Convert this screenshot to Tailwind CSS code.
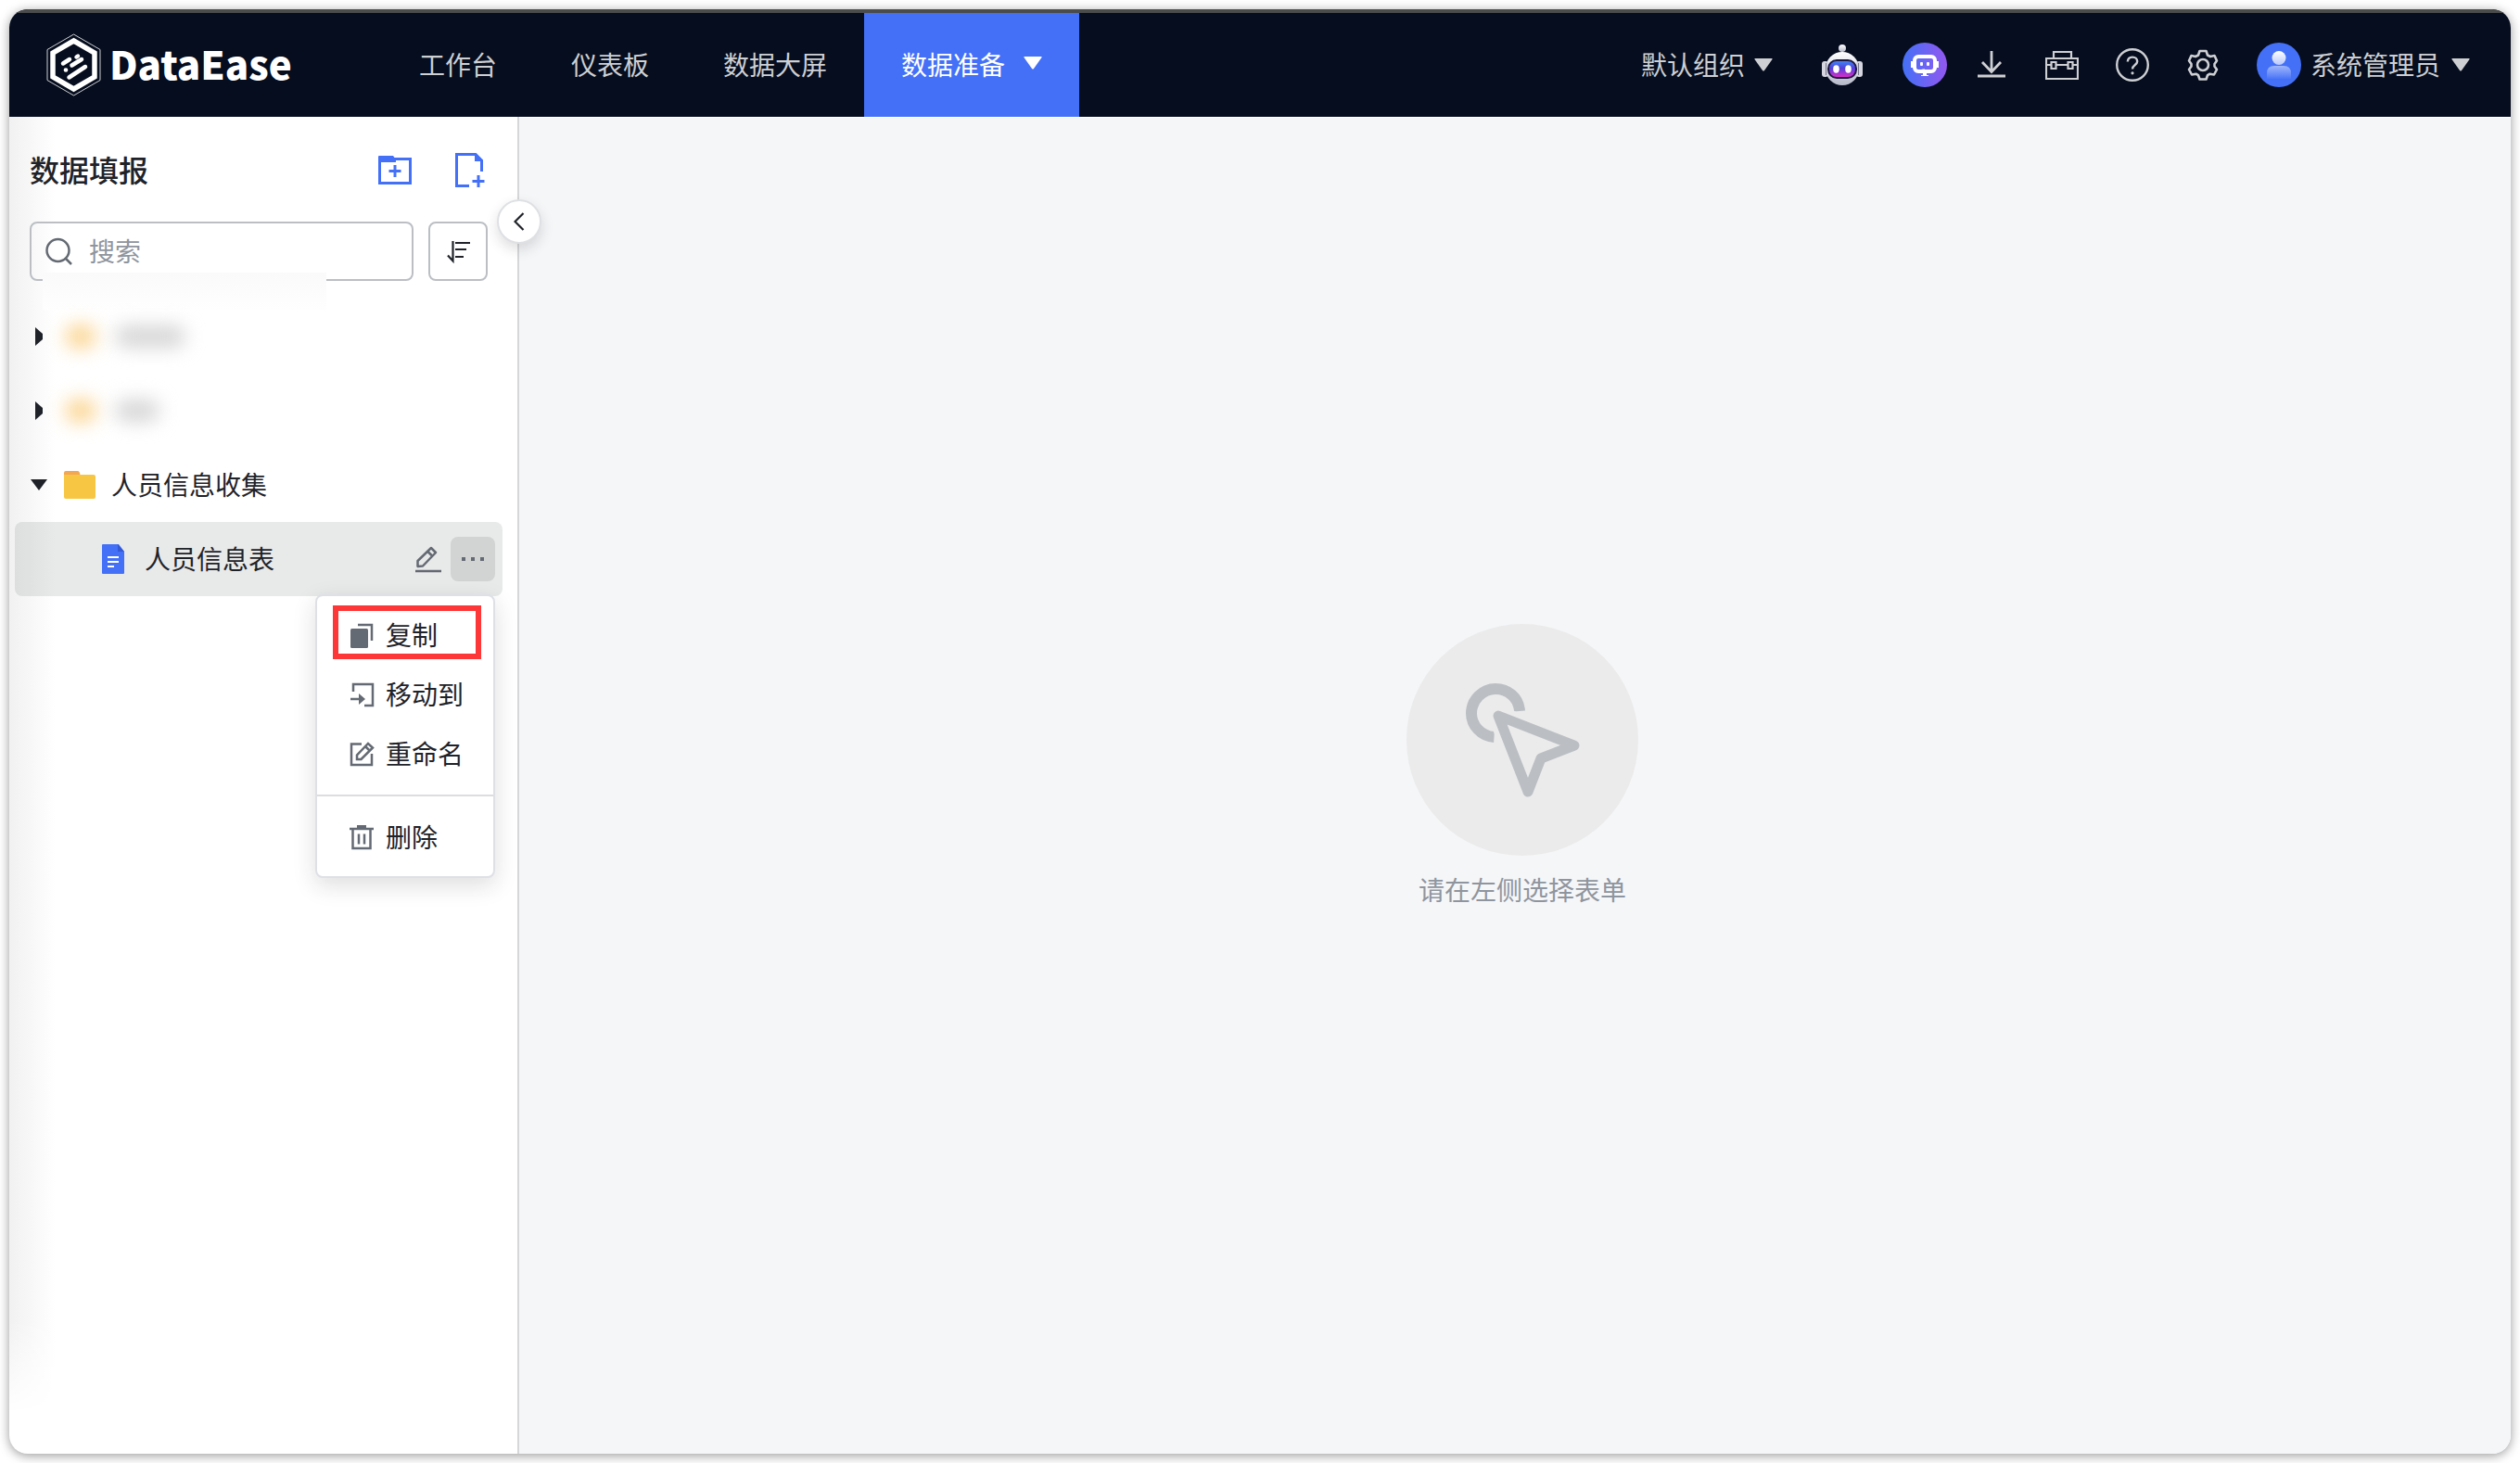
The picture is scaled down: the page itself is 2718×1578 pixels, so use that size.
<!DOCTYPE html>
<html lang="zh-CN">
<head>
<meta charset="utf-8">
<title>DataEase</title>
<script src="https://cdn.jsdelivr.net/npm/@tailwindcss/browser@4"></script>
</head>
<body class="h-screen bg-white p-[10px] font-['Noto_Sans_CJK_SC',sans-serif] text-[28px] leading-[40px] text-[#1f2329]">
<div class="flex h-full flex-col overflow-hidden rounded-[20px] bg-white shadow-[0_2px_12px_rgba(0,0,0,0.4)]">
  <header class="flex h-[116px] shrink-0 items-center border-t-4 border-[#4a4b4b] bg-[#060d1e] pr-[44px] pl-[40px] text-[#cdcfd3]">
    <a href="#" class="flex w-[362px] items-center gap-[8px] text-white">
      <svg class="h-[68px] w-[60px]" viewBox="0 0 60 68" fill="none"><path d="M29.500 1 58 17.500V50.500L29.500 67 1 50.500V17.500Z" stroke="#fff" stroke-width=".8"/><path d="M29.500 8 52 21V47L29.500 60 7 47V21Z" stroke="#fff" stroke-width="5.500"/><path d="M18 32.500 25 28M32.500 25.500 34 24.500M27.500 34.500 38 28M24.500 47.500 42 36" stroke="#fff" stroke-width="4.500" stroke-linecap="round"/><circle cx="21" cy="39.500" r="2.300" fill="#fff"/></svg>
      <span class="pb-1 text-[42px] leading-[56px] font-black">DataEase</span>
    </a>
    <nav class="flex h-full">
      <a href="#" class="flex items-center px-[40px] pb-[2px]">工作台</a>
      <a href="#" class="flex items-center px-[40px] pb-[2px]">仪表板</a>
      <a href="#" class="flex items-center px-[40px] pb-[2px]">数据大屏</a>
      <a href="#" class="flex items-center gap-[20px] bg-[#4370f7] px-[40px] pb-[2px] text-white">数据准备<svg class="mb-[2px] h-[14px] w-[20px]" viewBox="0 0 20 14" fill="currentColor"><path d="M1 0H19Q20 0 19.500 1L11 13Q10 14 9 13L.5 1Q0 0 1 0Z"/></svg></a>
    </nav>
    <div class="ml-auto flex items-center">
      <button class="mr-[52px] flex items-center gap-[10px]"><span class="pb-[2px]">默认组织</span><svg class="h-[14px] w-[20px]" viewBox="0 0 20 14" fill="currentColor"><path d="M1 0H19Q20 0 19.500 1L11 13Q10 14 9 13L.5 1Q0 0 1 0Z"/></svg></button>
      <button class="mr-[42px]" aria-label="智能助手">
        <svg class="h-[46px] w-[46px]" viewBox="0 0 46 46">
          <defs>
            <linearGradient id="head" x1="0" y1="0" x2="0" y2="1"><stop offset="0" stop-color="#fff"/><stop offset="1" stop-color="#b5b8c8"/></linearGradient>
            <linearGradient id="visor" x1="0" y1="0" x2="0" y2="1"><stop offset="0" stop-color="#3f8cf5"/><stop offset=".45" stop-color="#5340dc"/><stop offset="1" stop-color="#e62cc5"/></linearGradient>
          </defs>
          <rect x="22" y="6" width="2" height="5" fill="#9b9eae"/>
          <circle cx="23" cy="5" r="4" fill="url(#head)"/>
          <circle cx="23" cy="27" r="18" fill="url(#head)"/>
          <rect x="1" y="19" width="7" height="17" rx="3" fill="#d5d6e0"/><rect x="38" y="19" width="7" height="17" rx="3" fill="#d5d6e0"/>
          <path d="M5.500 21V34M40.500 21V34" stroke="#73768a"/>
          <rect x="8" y="18" width="30" height="19" rx="9" fill="url(#visor)" stroke="#1d1842" stroke-width="2"/>
          <ellipse cx="16.500" cy="27.500" rx="3.300" ry="4.200" fill="#fff"/><ellipse cx="29.500" cy="27.500" rx="3.300" ry="4.200" fill="#fff"/>
        </svg>
      </button>
      <button class="mr-[30px]" aria-label="智能问数">
        <svg class="h-[48px] w-[48px]" viewBox="0 0 48 48">
          <defs><linearGradient id="chat"><stop offset="0" stop-color="#4370f7"/><stop offset="1" stop-color="#9258f0"/></linearGradient></defs>
          <circle cx="24" cy="24" r="24" fill="url(#chat)"/>
          <rect x="13" y="15" width="22" height="16" rx="4" fill="none" stroke="#fff" stroke-width="4"/>
          <path d="M9 20H11V27H9ZM37 20H39V27H37ZM22 33H26V35H28V36H20V35H22Z" fill="#fff"/>
          <path d="M18 31Q19 28 24 28.500V31Z" fill="#fff"/>
          <rect x="19" y="21" width="3" height="4" rx="1" fill="#fff"/><rect x="26" y="21" width="3" height="4" rx="1" fill="#fff"/>
        </svg>
      </button>
      <button class="mr-[40px]" aria-label="下载"><svg class="h-[36px] w-[36px]" viewBox="0 0 36 36" fill="none" stroke="currentColor" stroke-width="2.800"><path d="M18 3V26M8 15 18 25.500 28 15M3 30H33"/></svg></button>
      <button class="mr-[40px]" aria-label="工具箱"><svg class="h-[36px] w-[36px]" viewBox="0 0 36 36" fill="none" stroke="currentColor" stroke-width="2.200"><path d="M1 11H35V33H1ZM9 10V4H28V10M1 18H6M12 18H24M30 18H35M6.500 15H11.500V22H6.500ZM24.500 15H29.500V22H24.500Z"/></svg></button>
      <button class="mr-[40px]" aria-label="帮助"><svg class="h-[36px] w-[36px]" viewBox="0 0 36 36" fill="none" stroke="currentColor" stroke-width="2.400"><circle cx="18" cy="18" r="16.800"/><path d="M12.800 14.500C13 11 15.300 9.600 18 9.600C21 9.600 23.200 11.500 23.200 14.200C23.200 18 18 18 18 22.500"/><circle cx="18" cy="26.800" r="1" fill="currentColor" stroke-width="1.200"/></svg></button>
      <button class="mr-[40px]" aria-label="设置"><svg class="h-[36px] w-[36px]" viewBox="0 0 36 36" fill="none" stroke="currentColor" stroke-width="2.600" stroke-linejoin="round"><path d="M14.500 3H21.500L23 7.500L26 9L30.500 8L33 13.500L30.500 17V19.500L33 23L30 28.500L25.500 27.700L23 29.200L21.500 33.500H14.500L13 29.200L10.500 27.700L6 28.500L3 23L5.500 19.500V17L3 13.500L5.500 8L10 9L13 7.500Z"/><circle cx="18" cy="18" r="6"/></svg></button>
      <button class="flex items-center">
        <svg class="mr-[10px] h-[48px] w-[48px]" viewBox="0 0 48 48">
          <defs><linearGradient id="face" x1="0" y1="0" x2="0" y2="1"><stop offset="0" stop-color="#fff"/><stop offset="1" stop-color="#b7c8fc"/></linearGradient><linearGradient id="torso" x1="0" y1="0" x2="0" y2="1"><stop offset="0" stop-color="#9fb6fb"/><stop offset="1" stop-color="#4a75f7"/></linearGradient></defs>
          <circle cx="24" cy="24" r="24" fill="#4370f7"/><circle cx="24" cy="16.500" r="7.500" fill="url(#face)"/><path d="M11 39V33Q11 25 19 25H29Q37 25 37 33V39Z" fill="url(#torso)"/>
        </svg>
        <span class="mr-[12px] pb-[2px]">系统管理员</span><svg class="h-[14px] w-[20px]" viewBox="0 0 20 14" fill="currentColor"><path d="M1 0H19Q20 0 19.500 1L11 13Q10 14 9 13L.5 1Q0 0 1 0Z"/></svg>
      </button>
    </div>
  </header>

  <div class="flex min-h-0 flex-1">
    <aside class="relative isolate w-[550px] shrink-0 border-r-2 border-[#d5d7d9] before:absolute before:inset-y-0 before:left-0 before:-z-10 before:w-[50px] before:bg-linear-to-r before:from-[#f1f1f1] before:to-white before:mask-b-from-90% before:mask-b-to-97%">
      <div class="flex h-[113px] items-center pr-[32px] pl-[22px]">
        <h1 class="flex-1 pb-[2px] text-[32px] leading-[48px] font-medium">数据填报</h1>
        <button class="mr-[40px] text-[#4370f7]" aria-label="新建文件夹"><svg class="h-[40px] w-[40px]" viewBox="0 0 40 40" fill="none" stroke="currentColor" stroke-width="3"><path d="M3.500 8.500H36.500V34.500H3.500Z"/><path d="M2 12V6Q2 5 3 5H18L21 9V12Z" fill="currentColor" stroke="none"/><path d="M20 15V28M13.500 21.500H26.500"/></svg></button>
        <button class="text-[#4370f7]" aria-label="新建表单"><svg class="h-[40px] w-[40px]" viewBox="0 0 40 40" fill="none" stroke="currentColor" stroke-width="3"><path d="M20 37.500H6.500V3.500H27L33.500 10V22"/><path d="M26 2 35 11H26Z" fill="currentColor" stroke="none"/><path d="M30 26V39M23.500 32.500H36.500"/></svg></button>
      </div>
      <div class="flex gap-[16px] pr-[32px] pl-[22px]">
        <label class="flex h-[64px] w-[414px] items-center gap-[16px] rounded-[8px] border-2 border-[#bbbfc4] px-[14px]">
          <svg class="h-[32px] w-[32px] shrink-0 text-[#646a73]" viewBox="0 0 32 32" fill="none" stroke="currentColor" stroke-width="2.500"><circle cx="14.500" cy="15" r="12"/><path d="M23 24 29 30"/></svg>
          <input type="text" aria-label="搜索" placeholder="搜索" class="w-full min-w-0 bg-transparent pb-[2px] outline-none placeholder:text-[#8f959e]">
        </label>
        <button class="flex h-[64px] w-[64px] items-center justify-center rounded-[8px] border-2 border-[#bbbfc4]" aria-label="排序"><svg class="h-[28px] w-[28px]" viewBox="0 0 28 28" fill="none" stroke="currentColor" stroke-width="2.200"><path d="M3 18.500 8.500 24.500V3M11 5H27M11 12H23M11 20H20"/></svg></button>
      </div>
      <div class="absolute top-[168px] left-[36px] h-[40px] w-[306px] bg-linear-to-b from-[#fafafa] to-[#fefefe]"></div>

      <ul class="mt-[20px] pr-[16px] pl-[6px]">
        <li class="flex h-[80px] items-center pl-[22px]">
          <svg class="h-[20px] w-[8px]" viewBox="0 0 8 20" fill="currentColor"><path d="M0 0 8 7V13L0 20Z"/></svg>
          <span class="ml-[24px] h-[26px] w-[34px] rounded-full bg-[#fbd695] blur-[10px]"></span>
          <span class="ml-[20px] h-[24px] w-[76px] rounded-full bg-[#d6d6d6] blur-[10px]"></span>
        </li>
        <li class="flex h-[80px] items-center pl-[22px]">
          <svg class="h-[20px] w-[8px]" viewBox="0 0 8 20" fill="currentColor"><path d="M0 0 8 7V13L0 20Z"/></svg>
          <span class="ml-[24px] h-[26px] w-[34px] rounded-full bg-[#fbd695] blur-[10px]"></span>
          <span class="ml-[20px] h-[24px] w-[48px] rounded-full bg-[#d6d6d6] blur-[10px]"></span>
        </li>
        <li class="flex h-[80px] items-center pl-[17px]">
          <svg class="h-[12px] w-[18px]" viewBox="0 0 18 12" fill="currentColor"><path d="M0 0H18L9 12Z"/></svg>
          <svg class="mr-[16px] ml-[17px] h-[36px] w-[36px]" viewBox="0 0 36 36"><path d="M1 8V5Q1 3 3 3H16Q18 3 18.500 8Z" fill="#f3a653"/><path d="M1 7H33Q35 7 35 9V31Q35 33 33 33H3Q1 33 1 31Z" fill="#f7c744"/></svg>
          <span class="pb-[2px]">人员信息收集</span>
        </li>
        <li class="relative flex h-[80px] items-center rounded-[8px] bg-[#1f2925]/10 pr-[8px] pl-[92px]">
          <svg class="mr-[20px] h-[36px] w-[28px]" viewBox="0 0 28 36"><path d="M2 3Q2 2 3 2H20L26 10V33Q26 34 25 34H3Q2 34 2 33Z" fill="#4370f7"/><path d="M19 2 26 10H19Z" fill="#3558d4"/><path d="M8 16H20M8 21H20M8 26H15" stroke="#fff" stroke-width="2"/></svg>
          <span class="flex-1 pb-[2px]">人员信息表</span>
          <button class="mr-[8px] text-[#646a73]" aria-label="编辑"><svg class="h-[32px] w-[32px]" viewBox="0 0 32 32" fill="none" stroke="currentColor" stroke-width="2.500" stroke-linejoin="round"><path d="M4.500 24V18L19 4 24 9 10 23.500ZM15.500 8 20 12.500M2 29H30"/></svg></button>
          <button class="flex h-[48px] w-[48px] items-center justify-center rounded-[8px] bg-[#d2d4d3] text-[#646a73]" aria-label="更多"><svg class="h-[24px] w-[24px]" viewBox="0 0 24 24" fill="currentColor"><path d="M0 10H4V14H0ZM10 10H14V14H10ZM20 10H24V14H20Z"/></svg></button>

          <div role="menu" class="absolute top-[78px] right-[8px] w-[194px] rounded-[8px] border-2 border-[#dee0e6] bg-white py-[10px] shadow-[0_8px_24px_rgba(31,35,41,0.15)]">
            <button role="menuitem" class="relative flex h-[64px] w-full items-center gap-[10px] pl-[32px]"><svg class="h-[32px] w-[32px] text-[#646a73]" viewBox="0 0 32 32" fill="none" stroke="currentColor" stroke-width="2.500"><rect x="4" y="9" width="19" height="21" rx="1.500" fill="currentColor" stroke="none"/><path d="M12 5H27V22"/></svg><span class="pb-[2px]">复制</span><span class="absolute top-0 right-[13px] left-[17px] h-[58px] border-6 border-[#fd3737]"></span></button>
            <button role="menuitem" class="flex h-[64px] w-full items-center gap-[10px] pl-[32px]"><svg class="h-[32px] w-[32px] text-[#646a73]" viewBox="0 0 32 32" fill="none" stroke="currentColor" stroke-width="2.500"><path d="M7 13V5H28V28H19M4 21H17"/><path d="M13 15 20 21 13 27Z" fill="currentColor" stroke="none"/></svg><span class="pb-[2px]">移动到</span></button>
            <button role="menuitem" class="flex h-[64px] w-full items-center gap-[10px] pl-[32px]"><svg class="h-[32px] w-[32px] text-[#646a73]" viewBox="0 0 32 32" fill="none" stroke="currentColor" stroke-width="2.500"><path d="M16 5.500H5V28H27V16M11 22V17.500L23 5 28 9.500 15.500 22ZM20 8 25 13"/></svg><span class="pb-[2px]">重命名</span></button>
            <hr class="my-[12px] border-t-2 border-[#dcdde0]">
            <button role="menuitem" class="flex h-[64px] w-full items-center gap-[10px] pl-[32px]"><svg class="h-[32px] w-[32px] text-[#646a73]" viewBox="0 0 32 32" fill="none" stroke="currentColor" stroke-width="2.500"><path d="M3 7H29M6.500 7V28H25.500V7M13 12.500V23.500M19 12.500V23.500"/><path d="M11 3H21V7H11Z" fill="currentColor" stroke="none"/></svg><span class="pb-[2px]">删除</span></button>
          </div>
        </li>
      </ul>
      <button class="absolute top-[89px] -right-[26px] flex h-[48px] w-[48px] items-center justify-center rounded-full border-2 border-[#dee0e3] bg-white shadow-[0_6px_14px_rgba(31,35,41,0.15)]" aria-label="收起"><svg class="h-[20px] w-[12px]" viewBox="0 0 12 20" fill="none" stroke="currentColor" stroke-width="2.200"><path d="M10.500 1 1.500 10 10.500 19"/></svg></button>
    </aside>

    <main class="flex flex-1 flex-col items-center justify-center border-t border-white bg-[#f5f6f8] pb-[44px] pl-[16px]">
      <svg class="h-[250px] w-[250px]" viewBox="0 0 250 250" fill="none" stroke="#bbbfc4" stroke-width="12">
        <circle cx="125" cy="125" r="125" fill="#ebebeb" stroke="none"/>
        <path d="M94.500 122C80 121 70 109 70 96.500C70 82 82 70 96 70C109 70 121 79 122 94"/>
        <path d="M99 99 181 131 145 145 131 181Z" stroke="#ebebeb" stroke-width="22" stroke-linejoin="round"/>
        <path d="M99 99 181 131 145 145 131 181Z" stroke-linejoin="round" stroke-width="11"/>
      </svg>
      <p class="mt-[16px] text-[#8f959e]">请在左侧选择表单</p>
    </main>
  </div>
</div>
</body>
</html>
